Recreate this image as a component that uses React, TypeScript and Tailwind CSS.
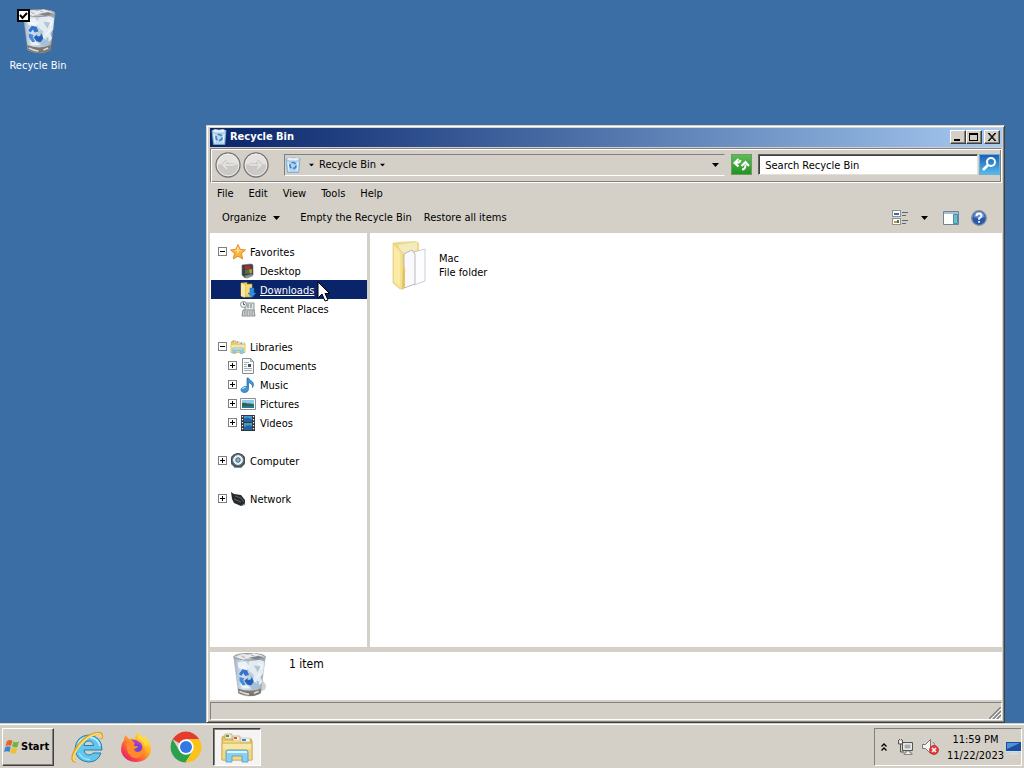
import { useId, type ReactNode } from 'react';

const raised =
  'border border-t-white border-l-white border-r-[#404040] border-b-[#404040] bg-[#d4d0c8] shadow-[inset_-1px_-1px_0_#808080]';

function Caret({ className = '' }: { className?: string }) {
  return (
    <svg viewBox="0 0 7 4" className={`h-1 w-[7px] shrink-0 ${className}`} aria-hidden="true">
      <path d="M0 0h7L3.500 4z" fill="#000" />
    </svg>
  );
}

function BinIcon({ className }: { className: string }) {
  const id = useId();
  return (
    <svg viewBox="0 0 36 48" className={className} aria-hidden="true">
      <defs>
        <linearGradient id={id} x1="0" x2="1" y1="0" y2="0">
          <stop offset="0" stopColor="#9fb3c6" />
          <stop offset=".25" stopColor="#d2dfeb" />
          <stop offset=".65" stopColor="#b5c6d6" />
          <stop offset="1" stopColor="#8fa3b8" />
        </linearGradient>
      </defs>
      <path d="M26 43l8-4 1-4-4-6z" fill="#666" opacity=".3" />
      <path d="M1 5l5 38q12 6 23 0L34 5z" fill={`url(#${id})`} stroke="#9aa7b5" strokeWidth=".5" />
      <path d="M5.500 38l.6 5q12 6 22.900 0l.7-5q-12 5-24.200 0z" fill="#7b766f" />
      <path d="M7 41q6 3 10 3M22 43l5-2" stroke="#dedad2" strokeWidth="1.800" fill="none" />
      <path d="M17 10l8-3 8 3-1 12-3 4 2 5-5 6-7-5 3-8-6-5z" fill="#e3ebf2" />
      <path d="M5 11l8-1 5 5-4 4-8-2zM8 33l6 1 5 4-9 0z" fill="#edf2f6" />
      <path d="M19 32l8-2 1 7-8 2z" fill="#a8c0d5" />
      <path d="M22 14l7 1-3 6zM18 24l4 3-3 3z" fill="#b3c4d4" />
      <path d="M27 12l4 2-2 4M29 22l-4 5M9 15l4 1M22 30l3 2" stroke="#fff" fill="none" />
      <ellipse cx="17.500" cy="5" rx="16.500" ry="3.500" fill="#bfc5ca" stroke="#99928f" />
      <path d="M3 5l7-3 6 1 6-2 9 3-6 3-7-1-7 2z" fill="#e8ebed" />
      <path d="M17 6l10-2 5 2-8 2z" fill="#7d8592" />
      <path d="M9 4l4 2M19 3l3 1" stroke="#a3a9af" />
      <g fill="#3474d0">
        <path d="M6.500 23l3.500-5 5 1 2 5-4 1-2-3-2 3z" />
        <path d="M7 26l5 1.500-1 2 2.500 5-3 .5-3.500-5z" fill="#4988da" />
        <path d="M15 34l-3-4 3.500-3v2h3l1.500-3 2 5-3 4z" fill="#2260bd" />
      </g>
    </svg>
  );
}

function SmallBinIcon({ className }: { className: string }) {
  return (
    <svg viewBox="0 0 16 16" className={className} aria-hidden="true">
      <path d="M1 1.500h14l-1.200 14H2.500z" fill="#b4d5ee" stroke="#7ba6ca" strokeWidth=".8" />
      <path d="M1 2l3-2 4 1 4-1 3 2-3 2H4z" fill="#e6f0f7" stroke="#8eacc4" strokeWidth=".6" />
      <path d="M3 5l1 9M13 5l-1 9" stroke="#eaf5fc" />
      <circle cx="8" cy="8.500" r="3" fill="none" stroke="#3f80cc" strokeWidth="1.700" strokeDasharray="4.500 1.700" />
    </svg>
  );
}

function ExplorerIcon({ className }: { className: string }) {
  return (
    <svg viewBox="0 0 32 30" className={className} aria-hidden="true">
      <path d="M1 5q0-2 2-2h6l2 3h18q2 0 2 2v19H1z" fill="#e3c468" stroke="#b98f33" strokeWidth=".7" />
      <path d="M4 1h7v5H4z" fill="#f4ead0" stroke="#a79557" strokeWidth=".6" />
      <path d="M5 2h3v2H5z" fill="#4b9b50" />
      <path d="M12 3h7v5h-7z" fill="#f7edda" stroke="#b09965" strokeWidth=".6" />
      <path d="M13 4h3v2h-3z" fill="#d45b3b" />
      <path d="M2 8h15l3-3h9v6H2z" fill="#f3dc91" />
      <path d="M20 5h9v4H19z" fill="#f8f7ed" stroke="#a9a68e" strokeWidth=".5" />
      <path d="M21 6h4v2h-4z" fill="#3d87cf" />
      <path d="M1 10h30v17H1z" fill="#f0d980" stroke="#cda74b" strokeWidth=".7" />
      <path d="M2 11h28v5H2z" fill="#f9eab0" opacity=".8" />
      <path d="M5 29V19q0-2 2-2h18q2 0 2 2v10h-6v-6h-10v6z" fill="#8bcff0" stroke="#4d9bc9" strokeWidth=".8" />
      <path d="M6 19q0-1 1-1h18q1 0 1 1v1H6z" fill="#dcf4ff" />
    </svg>
  );
}

function Small({ children }: { children: ReactNode }) {
  return (
    <svg viewBox="0 0 16 16" className="size-4 shrink-0" aria-hidden="true">
      {children}
    </svg>
  );
}

const icons: Record<string, ReactNode> = {
  Favorites: (
    <Small>
      <path d="M8 .5l2.200 4.800 5.300.6-4 3.600 1.200 5.500L8 12.200 3.300 15l1.200-5.500-4-3.600 5.300-.6z" fill="#f9b53a" stroke="#db7a1c" strokeWidth=".8" />
      <path d="M8 2l1.600 4.200 3.900.4-4.500.7L8 10 6.500 7 2.700 6.600l3.700-.5z" fill="#ffe08a" />
    </Small>
  ),
  Desktop: (
    <Small>
      <path d="M2 2l9-1q2 0 2 2v9l-8 3-3-3z" fill="#3b4047" stroke="#686d73" strokeWidth=".6" />
      <path d="M4.500 3l6-.6.6 4L5 7z" fill="#a5302f" />
      <path d="M5 7l4-.6.500 4L5 11z" fill="#427b3a" />
      <path d="M9 6.400l3-.4v4l-2.400.7z" fill="#b39a37" />
      <path d="M4 13l8-2 1 2-6 2.500z" fill="#8b8f94" />
    </Small>
  ),
  Downloads: (
    <Small>
      <path d="M1 1l6-.5V2h5v13H3l-2-1z" fill="#e9c85c" stroke="#c89f37" strokeWidth=".6" />
      <path d="M1 1l4 2v12.500L1 14z" fill="#f8e9a2" />
      <path d="M6 3h6v10H6z" fill="#f3da82" />
      <path d="M10 6h4v5h2l-4 4.500L8 11h2z" fill="#2e8fe0" stroke="#1765b4" strokeWidth=".5" />
    </Small>
  ),
  'Recent Places': (
    <Small>
      <path d="M5 2h9v8H5z" fill="#e3e6e7" stroke="#8c9497" />
      <path d="M7 4h2m1 0h2M7 6h2m1 0h2" stroke="#6c767a" />
      <path d="M3 9h11l1 6H2z" fill="#cfd3d4" stroke="#848d90" />
      <path d="M4 11h9M4 13h9" stroke="#778085" strokeDasharray="1.500 1" />
      <circle cx="3.500" cy="3.500" r="3" fill="#edf0f0" stroke="#8b9699" />
      <path d="M3.500 1.500v2H5" stroke="#515b5f" fill="none" />
    </Small>
  ),
  Libraries: <ExplorerIcon className="h-[14px] w-4 shrink-0" />,
  Documents: (
    <Small>
      <path d="M2.500.5h8l3 3v12h-11z" fill="#fafafa" stroke="#848c91" />
      <path d="M10.500.5v3h3z" fill="#ccd2d5" stroke="#737c82" strokeWidth=".6" />
      <path d="M4 4.500h5M4 6.500h3M4 8.500h3M4 10.500h8M4 12.500h8" stroke="#90999d" strokeWidth=".8" />
      <path d="M8 6h3v3H8z" fill="#465259" />
    </Small>
  ),
  Music: (
    <Small>
      <path d="M7 1h1.500c1 3 5 3 5 6.500 0 1-.5 2-1 3 .5-3-2-4.500-4-5v6c0 3-2 4.200-4.500 4S1 13.500 1 12.500 3 9 7 9.500z" fill="#3e96d7" stroke="#1b68aa" strokeWidth=".7" />
      <path d="M2.500 12q1-2 3-1.500" stroke="#b5e2fb" strokeWidth="1.300" fill="none" />
    </Small>
  ),
  Pictures: (
    <Small>
      <path d="M.5 2.500h15v11H.5z" fill="#fff" stroke="#879198" />
      <path d="M2 4h12v8H2z" fill="#8ccbea" />
      <path d="M2 9q5-3 12-1v4H2z" fill="#287a93" />
      <path d="M2 7q3-1 6 1l6 1v1H2z" fill="#395e4c" />
    </Small>
  ),
  Videos: (
    <Small>
      <path d="M1 0h14v16H1z" fill="#30383e" />
      <path d="M4 1h8v6H4zM4 8h8v7H4z" fill="#4898cd" />
      <path d="M4 4q4-3 8 1v2H4zM4 12q4-3 8-1v4H4z" fill="#21639d" />
      <path d="M2.500 1v14M13.500 1v14" stroke="#fff" strokeWidth="1.200" strokeDasharray="1.300 1.700" />
    </Small>
  ),
  Computer: (
    <Small>
      <path d="M1 4l3-3h8l3 3v7l-3 3H4l-3-3z" fill="#576670" />
      <circle cx="8" cy="7" r="6.500" fill="#6f7d86" stroke="#34434d" />
      <circle cx="8" cy="7" r="4.300" fill="#dceaf1" stroke="#fff" />
      <circle cx="8" cy="7" r="2.200" fill="#8fb6cd" stroke="#445f70" />
      <path d="M4 14h8v1H4z" fill="#8d969c" />
    </Small>
  ),
  Network: (
    <Small>
      <path d="M1 1l3 2 7 1 4 5v4l-4 2-7-3-2-4z" fill="#272b2e" />
      <path d="M5 5l6 2 3 4M4 8l7 3" stroke="#5d6367" fill="none" />
      <path d="M11 15l4-1v-2z" fill="#889095" />
    </Small>
  ),
};

type TreeNode = { name: string; children?: string[]; childExpand?: boolean; open?: boolean };

const tree: TreeNode[] = [
  { name: 'Favorites', open: true, children: ['Desktop', 'Downloads', 'Recent Places'] },
  { name: 'Libraries', open: true, childExpand: true, children: ['Documents', 'Music', 'Pictures', 'Videos'] },
  { name: 'Computer' },
  { name: 'Network' },
];

function Expander({ open, name }: { open?: boolean; name: string }) {
  return (
    <button type="button" aria-label={`${open ? 'Collapse' : 'Expand'} ${name}`} className="size-[9px] shrink-0">
      <svg viewBox="0 0 9 9" className="size-[9px]" shapeRendering="crispEdges" aria-hidden="true">
        <path d="M.5.5h8v8h-8z" fill="#fff" stroke="#808080" />
        <path d={open ? 'M2 4.500h5' : 'M2 4.500h5M4.500 2v5'} stroke="#000" />
      </svg>
    </button>
  );
}

function TreeRow({ name, open, child, expand }: { name: string; open?: boolean; child?: boolean; expand?: boolean }) {
  const selected = name === 'Downloads';
  return (
    <div className={`ml-px flex h-[19px] items-center gap-[3px] ${child ? 'pl-[17px]' : 'pl-[7px]'} ${selected ? 'bg-[#0a246a] text-white' : ''}`}>
      {expand ? <Expander open={open} name={name} /> : <span className="w-[9px] shrink-0" />}
      <a href="#" className="flex items-center gap-1 whitespace-nowrap">
        {icons[name]}
        <span className={`pt-0.5 ${selected ? 'underline' : ''}`}>{name}</span>
      </a>
    </div>
  );
}

function RoundArrow({ flip }: { flip?: boolean }) {
  return (
    <button type="button" aria-label={flip ? 'Forward' : 'Back'} className="size-[26px]">
      <svg viewBox="0 0 26 26" className="size-[26px]" aria-hidden="true">
        <circle cx="13" cy="13" r="12" fill="#cbc9c5" stroke="#77767a" strokeWidth="1.300" />
        <path d="M2.500 12a10.500 10.500 0 0121 0q-10 3-21 0z" fill="#e4e2de" />
        <circle cx="13" cy="13" r="10.800" fill="none" stroke="#f5f4f1" strokeWidth=".8" />
        <path d={flip ? 'M7 13h11M14 9l4 4-4 4' : 'M19 13H8M12 9l-4 4 4 4'} fill="none" stroke="#c3c1bd" strokeWidth="3.500" />
        <path d={flip ? 'M7 13h11M14 9l4 4-4 4' : 'M19 13H8M12 9l-4 4 4 4'} fill="none" stroke="#e2e0dc" strokeWidth="2" />
      </svg>
    </button>
  );
}

function WindowButton({ label, children }: { label: string; children: ReactNode }) {
  return (
    <button type="button" aria-label={label} className={`flex h-[14px] w-4 items-center justify-center ${raised}`}>
      <svg viewBox="0 0 12 10" className="h-[10px] w-3" fill="none" stroke="#000" shapeRendering="crispEdges" aria-hidden="true">
        {children}
      </svg>
    </button>
  );
}

function ExplorerWindow() {
  return (
    <section
      aria-label="Recycle Bin"
      className="absolute top-[125px] right-[19px] bottom-0 left-[206px] flex flex-col border border-t-[#d4d0c8] border-r-[#404040] border-b-[#404040] border-l-[#d4d0c8] bg-[#d4d0c8] pt-0.5 pr-0.5 pl-[3px] shadow-[inset_1px_1px_0_#fff,inset_-1px_-1px_0_#808080]"
    >
      <header className="mb-px flex h-[19px] shrink-0 items-center gap-[3px] bg-linear-to-r from-[#0a246a] to-[#a6caf0] pr-0.5 pb-px pl-px font-bold text-white">
        <SmallBinIcon className="size-4" />
        <h1>Recycle Bin</h1>
        <div className="ml-auto flex">
          <WindowButton label="Minimize">
            <path d="M2 8h6" strokeWidth="2" />
          </WindowButton>
          <WindowButton label="Maximize">
            <path d="M2 1.500h8M1.500 1v8M9.500 1v8M2 8.500h8M2 2.500h8" />
          </WindowButton>
          <span className="w-0.5" />
          <WindowButton label="Close">
            <path d="M2 1l7 8M3 1l7 8M9 1L2 9M10 1L3 9" shapeRendering="auto" />
          </WindowButton>
        </div>
      </header>

      <div className="flex h-[35px] shrink-0 items-center border border-[#808080] border-r-white border-b-white pr-px pb-0.5 pl-1 shadow-[inset_1px_1px_0_#fff,inset_-1px_-1px_0_#808080]">
        <div className="flex gap-0.5">
          <RoundArrow />
          <RoundArrow flip />
        </div>
        <div className="ml-[15px] flex h-[22px] min-w-0 flex-1 items-center border border-t-[#808080] border-r-[#d4d0c8] border-b-white border-l-[#808080] pr-[5px]">
          <SmallBinIcon className="size-4" />
          <button type="button" aria-label="Locations" className="flex pr-1 pl-[7px]">
            <Caret className="scale-75" />
          </button>
          <button type="button" className="flex items-center gap-[3px]">
            Recycle Bin
            <Caret className="scale-75" />
          </button>
          <button type="button" aria-label="Previous locations" className="ml-auto flex">
            <Caret />
          </button>
        </div>
        <button type="button" aria-label="Refresh" className="ml-1.5 size-[21px] border border-[#6b9d68] bg-linear-to-b from-[#5fbb58] to-[#1f9420]">
          <svg viewBox="0 0 19 19" className="size-[19px]" fill="none" stroke="#fff" strokeWidth="2" aria-hidden="true">
            <path d="M8.500 5Q8 8 3.500 8M6.500 4L2.500 8l4 3.500" />
            <path d="M10 14.500q3.500 0 3.500-5M9.500 11l4-4 3.500 4" />
          </svg>
        </button>
        <input
          type="search"
          aria-label="Search Recycle Bin"
          placeholder="Search Recycle Bin"
          className="ml-1.5 h-[21px] w-[28%] min-w-0 border border-t-[#606060] border-r-[#e4e0d8] border-b-[#e4e0d8] border-l-[#606060] bg-white px-1.5 pt-px shadow-[inset_1px_1px_0_#404040] outline-none placeholder:text-black"
        />
        <button type="button" aria-label="Search" className="ml-px size-[21px] border border-[#6baed8] bg-linear-to-b from-[#1c5fb8] to-[#58bbea]">
          <svg viewBox="0 0 19 19" className="size-[19px]" fill="none" stroke="#fff" aria-hidden="true">
            <circle cx="11" cy="7" r="4" strokeWidth="2" />
            <path d="M8 10l-5 5" strokeWidth="2.600" />
          </svg>
        </button>
      </div>

      <nav aria-label="Menu" className="flex h-5 shrink-0 items-center gap-[15px] pt-0.5 pl-[7px]">
        <button type="button">File</button>
        <button type="button">Edit</button>
        <button type="button">View</button>
        <button type="button">Tools</button>
        <button type="button">Help</button>
      </nav>

      <div className="mb-0.5 flex h-7 shrink-0 items-center gap-3 pt-px pl-3">
        <button type="button" className="mr-2 flex items-center gap-[7px]">
          Organize
          <Caret />
        </button>
        <button type="button">Empty the Recycle Bin</button>
        <button type="button">Restore all items</button>
        <div className="mr-[15px] ml-auto flex items-center">
          <button type="button" aria-label="Change view">
            <svg viewBox="0 0 17 16" className="h-4 w-[17px]" shapeRendering="crispEdges" aria-hidden="true">
              <path d="M.5.5h8v6h-8zM.5 8.500h8v6h-8z" fill="#fff" stroke="#8b929a" />
              <path d="M2 3h5v2H2z" fill="#386ba0" />
              <path d="M2 11h3v2H2z" fill="#c09d2d" />
              <path d="M5 10h2v3H5z" fill="#4c7948" />
              <path d="M10 2.500h6M10 5.500h4M10 10.500h6M10 13.500h4" stroke="#5e6870" />
            </svg>
          </button>
          <button type="button" aria-label="More view options" className="ml-3 flex">
            <Caret />
          </button>
          <button type="button" aria-label="Preview pane" className="ml-[15px]">
            <svg viewBox="0 0 16 14" className="h-[14px] w-4" aria-hidden="true">
              <path d="M.5.500h15v13H.500z" fill="#fff" stroke="#6f8398" />
              <path d="M1 1h14v2H1z" fill="#a7bfd5" />
              <path d="M10.500 3.500h4v9h-4z" fill="#67bfd6" stroke="#4b8d9f" />
            </svg>
          </button>
          <button type="button" aria-label="Help" className="ml-3">
            <svg viewBox="0 0 16 16" className="size-4" aria-hidden="true">
              <circle cx="8" cy="8" r="7.300" fill="#2859ab" stroke="#858fa5" strokeWidth="1.300" />
              <path d="M2.500 7a5.500 5.500 0 0111 0q-5 2-11 0z" fill="#6b94d6" />
              <path d="M5.500 6q0-2.500 2.500-2.500T10.500 6Q10.500 7.200 8 8.500v1.300M8 11v1.700" fill="none" stroke="#fff" strokeWidth="1.800" />
            </svg>
          </button>
        </div>
      </div>

      <div className="flex min-h-0 flex-1">
        <nav aria-label="Folders" className="flex w-[157px] shrink-0 flex-col gap-[19px] bg-white pt-[9px]">
          {tree.map((node) => (
            <div key={node.name}>
              <TreeRow name={node.name} open={node.open} expand />
              {node.children?.map((child) => (
                <TreeRow key={child} name={child} child expand={node.childExpand} />
              ))}
            </div>
          ))}
        </nav>
        <div className="w-[3px] shrink-0 bg-[#d4d0c8]" />
        <main className="min-w-0 flex-1 bg-white px-5 pt-2">
          <a href="#" className="flex w-fit items-center gap-3">
            <svg viewBox="0 0 37 50" className="h-[50px] w-[37px]" aria-hidden="true">
              <path d="M3 2l4-1 19-1 3 2v10l-13 4v30l-4 3z" fill="#ecd98e" />
              <path d="M8 4l19-3v8L12 14z" fill="#f3ebbd" />
              <path d="M24 11l11-3v32l-11 4z" fill="#fdfdff" stroke="#b9bac4" strokeWidth=".7" />
              <path d="M14 13l8-4 3 4v30l-11 4z" fill="#faf9fc" stroke="#aaa9b0" strokeWidth=".8" />
              <path d="M3 2l10 10v36h-3L3 42z" fill="#f5e08c" stroke="#dbc472" strokeWidth=".6" />
              <path d="M4 4l6 8v33l-6-5z" fill="#fff0b1" opacity=".7" />
              <path d="M13 25q3 2 2 7v13l-3 4z" fill="#e0c566" />
            </svg>
            <span className="leading-[14px]">
              Mac
              <br />
              File folder
            </span>
          </a>
        </main>
      </div>

      <div className="mt-[5px] flex h-12 shrink-0 gap-[21px] bg-white pl-[22px]">
        <BinIcon className="h-[46px] w-9" />
        <p className="pt-1 text-xs leading-4">1 item</p>
      </div>
      <footer className="mt-0.5 mb-0.5 flex h-[18px] shrink-0 items-end justify-end border border-t-[#808080] border-r-white border-b-white border-l-[#808080]">
        <svg viewBox="0 0 12 12" className="size-3" aria-hidden="true">
          <path d="M0 12L12 0M4 12l8-8M8 12l4-4" stroke="#808080" strokeWidth="1.500" />
          <path d="M2 12L12 2M6 12l6-6M10 12l2-2" stroke="#fff" />
        </svg>
      </footer>
    </section>
  );
}

function Taskbar() {
  return (
    <footer className="flex h-[45px] shrink-0 items-center border-t border-[#d4d0c8] bg-[#d4d0c8] pt-0.5 pr-0.5 pb-px pl-0.5 shadow-[inset_0_1px_0_#fff]">
      <button type="button" className={`flex h-[38px] w-[52px] items-center gap-px pl-px font-bold ${raised}`}>
        <svg viewBox="0 0 16 16" className="size-4 shrink-0" aria-hidden="true">
          <path d="M3 2q3-2 5.500 0L7 7Q4.500 5.500 1.500 7z" fill="#e6652c" />
          <path d="M9.500 2.500Q12 4 15 2.500L13.500 8Q11 9 8 7.500z" fill="#74b63c" />
          <path d="M1.300 8Q4 6.500 6.700 8L5.500 13Q3 11.500 0 13z" fill="#3d86cf" />
          <path d="M7.700 8.500Q10.500 10 13.200 9L12 14q-3 1-5.700-.5z" fill="#f2bf2b" />
        </svg>
        Start
      </button>
      <nav aria-label="Programs" className="ml-[17px] flex items-center">
        <button type="button" aria-label="Internet Explorer" className="h-8 w-[33px]">
          <svg viewBox="0 0 33 32" className="h-8 w-[33px]" aria-hidden="true">
            <path
              fillRule="evenodd"
              d="M31 19H13q1 5 5 5 3 0 4-2h8q-3 9-12.500 9Q5 30 4 18 5 5 17.500 4 31 5 31 19zM13 14.500h9.500q-.5-4.500-4.700-4.500T13 14.500z"
              fill="#62c7ee"
              stroke="#237fae"
              strokeWidth="1"
            />
            <path d="M6 16Q8 6 18 6q9 1 11 9" stroke="#c2f0ff" strokeWidth="1.600" fill="none" />
            <path d="M8 22q4 7 11 6.500" stroke="#a4e3fa" strokeWidth="1.400" fill="none" />
            <path d="M5 30Q-1 30 4 20 11 7 23 3 33 0 30 8" fill="none" stroke="#dda52a" strokeWidth="3" />
            <path d="M5 30Q0 29 5 20 12 8 23 3.500 31 1 30 7" fill="none" stroke="#ffe176" strokeWidth="1.500" />
          </svg>
        </button>
        <button type="button" aria-label="Firefox" className="ml-4 size-8">
          <svg viewBox="0 0 32 32" className="size-8" aria-hidden="true">
            <defs>
              <linearGradient id="fox" x1=".9" x2=".2" y1=".1" y2=".9">
                <stop stopColor="#fff24a" />
                <stop offset=".45" stopColor="#ffa025" />
                <stop offset=".75" stopColor="#ff553c" />
                <stop offset="1" stopColor="#e52867" />
              </linearGradient>
            </defs>
            <path d="M4 9l1-5 4 4q3-1 6 0 0-4 4-7 1 4 5 6l1-2q6 6 6 13a15 13 0 11-30 0q0-5 3-9z" fill="url(#fox)" />
            <circle cx="16.500" cy="16.500" r="6" fill="#7542d5" />
            <path d="M11 9q5-1 8 2 3 2 3 5-2-3-5-3z" fill="#b13cc8" />
            <path d="M6 13q4-4 9-1l-1 3h4q-1 3-4 3 1 3 4 3 5-1 4-6 4 3 2 7-3 5-9 5-8-1-9-14z" fill="#ff8a2a" />
            <path d="M18 8q6 1 7 7l3-1Q26 8 20 5l-1-3z" fill="#ffdd38" />
          </svg>
        </button>
        <button type="button" aria-label="Chrome" className="ml-[18px] size-8">
          <svg viewBox="0 0 32 32" className="size-8" aria-hidden="true">
            <path d="M16 16L2.600 8.300A15.500 15.500 0 0129.400 8.300H16z" fill="#e33b2e" />
            <path d="M2.600 8.300A15.500 15.500 0 0015.500 31.500L22.500 20 9.500 20z" fill="#2ba14e" />
            <path d="M16 8.300h13.400A15.500 15.500 0 0115.500 31.500L22.700 20z" fill="#fbc21a" />
            <circle cx="16" cy="16" r="7.700" fill="#fff" />
            <circle cx="16" cy="16" r="6" fill="#3478e5" />
          </svg>
        </button>
        <button
          type="button"
          aria-label="File Explorer"
          className="ml-[11px] flex h-[38px] w-12 items-center justify-center border border-[#404040] border-r-white border-b-white bg-[#f5f4f2] pt-0.5 shadow-[inset_1px_1px_0_#808080]"
        >
          <ExplorerIcon className="h-[30px] w-8" />
        </button>
      </nav>

      <div className="ml-auto flex h-[38px] items-center border border-[#808080] border-r-white border-b-white pl-1.5">
        <button type="button" aria-label="Show hidden icons">
          <svg viewBox="0 0 6 8" className="h-2 w-1.5" fill="none" stroke="#000" strokeWidth="1.300" aria-hidden="true">
            <path d="M.5 3.500L3 1l2.500 2.500M.5 7.500L3 5l2.500 2.500" />
          </svg>
        </button>
        <button type="button" aria-label="Network" className="ml-2.5">
          <svg viewBox="0 0 17 16" className="h-4 w-[17px]" aria-hidden="true">
            <path d="M5.500 3.500h10v8h-10z" fill="#d5d5d2" stroke="#555" />
            <path d="M7 5h7v5H7z" fill="#a7aaa9" stroke="#f8f8f8" />
            <path d="M9 12h4v2h2v1.500H7V14h2z" fill="#eee" stroke="#666" strokeWidth=".7" />
            <path d="M1.500 1v4h4V1M2.500 1V0M4.500 1V0M3.500 5v8H7" fill="none" stroke="#555" />
            <path d="M2.500 2h2v2h-2z" fill="#fff" />
          </svg>
        </button>
        <button type="button" aria-label="Volume muted" className="ml-2">
          <svg viewBox="0 0 17 16" className="h-4 w-[17px]" aria-hidden="true">
            <path d="M.5 5.500h3l5-5v14l-5-5h-3z" fill="#f6f6f6" stroke="#777" />
            <path d="M11 3q2 2 2 4" fill="none" stroke="#888" />
            <circle cx="12" cy="11" r="4.500" fill="#e43c3d" stroke="#b52127" strokeWidth=".7" />
            <path d="M10 9l4 4M14 9l-4 4" stroke="#fff" strokeWidth="1.500" />
          </svg>
        </button>
        <time dateTime="2023-11-22T23:59" className="ml-2 pt-0.5 text-center leading-4">
          11:59 PM
          <br />
          11/22/2023
        </time>
        <button type="button" aria-label="Show desktop" className="ml-0.5 pt-1">
          <svg viewBox="0 0 15 13" className="h-[13px] w-[15px]" aria-hidden="true">
            <path d="M0 0h15v9H0z" fill="#1d4d9e" />
            <path d="M1 1h13L1 7z" fill="#4f91d9" />
            <path d="M0 9h15v1H0zM3 11h9v1.500H3z" fill="#cce0ee" />
          </svg>
        </button>
      </div>
    </footer>
  );
}

export default function App() {
  return (
    <div className="flex h-screen cursor-default flex-col overflow-hidden bg-[#3a6ea5] font-['Tahoma','DejaVu_Sans_Condensed','DejaVu_Sans',sans-serif] text-[11px] leading-[14px] text-black">
      <div className="relative min-h-0 flex-1">
        <label className="absolute top-2 left-0 flex w-[76px] flex-col items-center text-white">
          <span className="ml-0.5 flex">
            <BinIcon className="h-[47px] w-[35px]" />
          </span>
          <span className="pt-1">Recycle Bin</span>
          <input type="checkbox" defaultChecked className="absolute top-px left-[17px] size-[13px] appearance-none border-2 border-black bg-white" />
          <svg viewBox="0 0 13 13" className="pointer-events-none absolute top-px left-[17px] size-[13px]" fill="none" stroke="#000" strokeWidth="2" aria-hidden="true">
            <path d="M3 6l2.500 3L10 4" />
          </svg>
        </label>
        <ExplorerWindow />
        <svg viewBox="0 0 13 21" className="pointer-events-none absolute top-[281px] left-[317px] h-[21px] w-[13px]" aria-hidden="true">
          <path d="M1 1v16l4-4 3 7 3-1-3-6.500h4.500z" fill="#fff" stroke="#000" />
        </svg>
      </div>
      <Taskbar />
    </div>
  );
}
